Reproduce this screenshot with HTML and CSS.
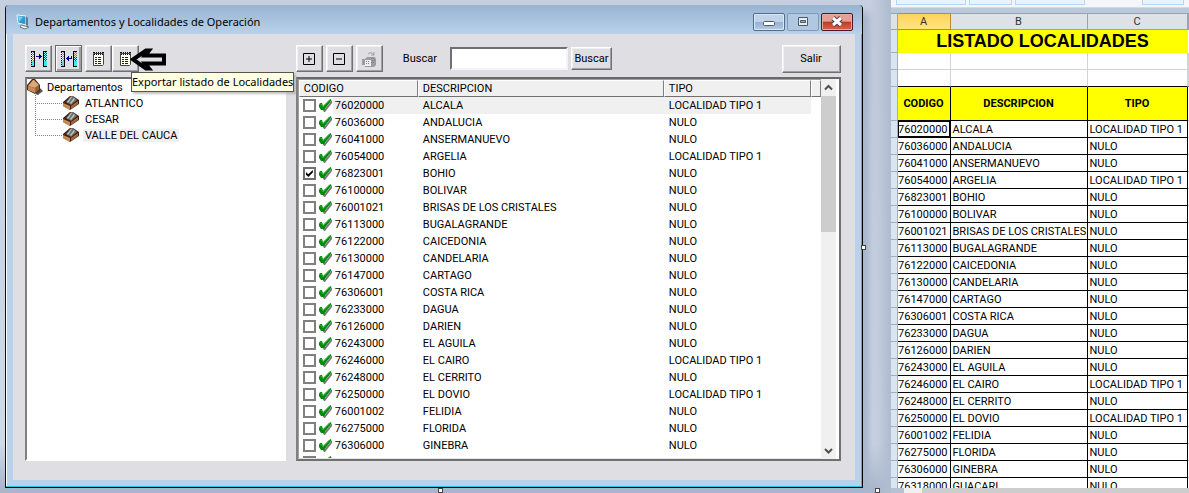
FILE: index.html
```html
<!DOCTYPE html>
<html lang="es">
<head>
<meta charset="utf-8">
<title>Departamentos y Localidades de Operación</title>
<link rel="stylesheet" href="styles.css">
</head>
<body>
<svg class="defs" aria-hidden="true">
  <symbol id="tick" viewBox="0 0 13 15">
    <path d="M3 11l2 3h1l7-9V2L6 11z" fill="#777"/>
    <path d="M0 7l1-2h2l1 3 6-6 2-1v2L5 12H2L0 9z" fill="#008a0c"/>
    <path d="M1 6h1l2 3 7-7" fill="none" stroke="#22ad2b"/>
  </symbol>
  <symbol id="drawer" viewBox="0 0 16 16">
    <path d="M0 7L7 1h3l6 4v4l-9 6L0 11z" fill="#3d2413"/>
    <path d="M0 8l7 3v4l-7-4z" fill="#c98a58"/>
    <path d="M8 11l7-5v3l-7 5z" fill="#a5673c"/>
    <path d="M3 7l5-6h2l4 4-6 5z" fill="#6e7072"/>
    <path d="M4 7l4-5h1L5 8zM7 8l4-5 1 1-4 5z" fill="#c4c7ca"/>
  </symbol>
  <symbol id="notes" viewBox="0 0 14 16">
    <path d="M1.500 2.500h10v11l-1 1h-9z" fill="#fffff0" stroke="#444"/>
    <path d="M1 1h2v1H1zm3 0h1v1H4zm2 0h1v1H6zm2 0h1v1H8zm2 0h2v1h-2zM2 3h1v1H2zm2 0h1v1H4zm2 0h1v1H6zm2 0h1v1H8zm2 0h1v1h-1z" fill="#111"/>
    <path d="M3 6.500h2m1 0h3m-6 2h2m1 0h3m-6 2h2m1 0h3m-6 2h2m1 0h3" stroke="#222"/>
  </symbol>
  <pattern id="check-cyan" width="2" height="2" patternUnits="userSpaceOnUse"><path d="M0 0h2v2H0z" fill="#fff"/><path d="M0 0h1v1H0zM1 1h1v1H1z" fill="#00b5c0"/></pattern>
  <pattern id="check-blue" width="2" height="2" patternUnits="userSpaceOnUse"><path d="M0 0h2v2H0z" fill="#9ff"/><path d="M0 0h1v1H0zM1 1h1v1H1z" fill="#22f"/></pattern>
  <pattern id="check-gold" width="2" height="2" patternUnits="userSpaceOnUse"><path d="M0 0h2v2H0z" fill="#dde0d0"/><path d="M0 0h1v1H0zM1 1h1v1H1z" fill="#96852a"/></pattern>
  <symbol id="strips" viewBox="0 0 16 18">
    <path d="M0 1h4v1H0zM3 1h1v16H3zM0 16h4v1H0zM12 1h4v1h-4zM12 1h1v16h-1zM12 16h4v1h-4z" fill="#000"/>
    <path d="M0 2h3v9H0z" fill="url(#check-cyan)"/>
    <path d="M0 11h3v5H0zM13 11h3v5h-3z" fill="#3fe6ee"/>
    <path d="M0 2h1v1H0zM0 4h1v1H0zM0 6h1v1H0zM0 8h1v1H0zM0 10h1v1H0zM0 12h1v1H0zM0 14h1v1H0z" fill="#000"/>
  </symbol>
</svg>

<main class="desktop">
  <section class="dialog">
    <header class="titlebar">
      <svg class="app-icon" viewBox="0 0 15 16" aria-hidden="true">
        <path d="M1 1l9 1v9L2 9z" fill="#2c9bd4" stroke="#eef7fc"/>
        <path d="M2 2l5 1-4 5z" fill="#85cdf0"/>
        <path d="M10 2l2 2v8l-2-1z" fill="#647b8c"/>
        <path d="M5 11l4 1 4 1-4 2-5-2z" fill="#f3f5f6" stroke="#687783"/>
      </svg>
      <h1>Departamentos y Localidades de Operación</h1>
      <div class="window-buttons">
        <button class="win" type="button" aria-label="Minimizar"><svg viewBox="0 0 30 16"><rect x="9.500" y="7.500" width="11" height="4" rx="1" fill="#fff" stroke="#505a65"/></svg></button>
        <button class="win faded" type="button" aria-label="Maximizar"><svg viewBox="0 0 30 16"><path d="M10.500 3.500h9v8h-9z" fill="#e7ebef" stroke="#505a65"/><path d="M12.500 6.500h5v2h-5z" fill="#8fadd0" stroke="#505a65"/></svg></button>
        <button class="win close" type="button" aria-label="Cerrar"><svg viewBox="0 0 30 16"><path d="M11 4l8 7M19 4l-8 7" stroke="#5b3a40" stroke-width="5"/><path d="M11 4l8 7M19 4l-8 7" stroke="#fff" stroke-width="3"/></svg></button>
      </div>
    </header>

    <div class="client">
      <div class="left">
        <div class="tools">
          <button class="tool" type="button" aria-label="Expandir"><svg viewBox="0 0 16 18"><use href="#strips"/><path d="M13 2h3v9h-3z" fill="url(#check-blue)"/><path d="M5 6h3V4h1v1h1v1h1v1h-1v1H9v1H8V7H5z" fill="#000090"/></svg></button>
          <button class="tool default" type="button" aria-label="Contraer"><svg viewBox="0 0 16 18"><use href="#strips"/><path d="M13 2h3v5h-3z" fill="url(#check-gold)"/><path d="M13 7h3v4h-3z" fill="url(#check-blue)"/><path d="M11 6h-1v2H8V6H7v1H6v1H5v1h1v1h1v1h1V9h3z" fill="#000090"/></svg></button>
          <span class="pair">
            <button class="tool" type="button" aria-label="Exportar departamentos"><svg class="note" viewBox="0 0 14 16"><use href="#notes"/></svg></button>
            <button class="tool" type="button" aria-label="Exportar localidades" aria-describedby="tip"><svg class="note" viewBox="0 0 14 16"><use href="#notes"/></svg></button>
            <svg class="pointer" viewBox="0 0 37 23" aria-hidden="true"><path d="M3 11.500L16 2.500h3l-4 5h19v8H15l4 5h-3z" fill="#dfdee3" stroke="#000" stroke-width="4"/></svg>
            <span class="tooltip" id="tip" role="tooltip">Exportar listado de Localidades</span>
          </span>
        </div>
        <div class="tree sunken">
          <div class="node root">
            <svg viewBox="0 0 16 16" aria-hidden="true"><path d="M9 11l4-2 3 3-5 4-3-1z" fill="#55565a"/><path d="M0 6l5-6h3l5 6v6l-5 3-8-4z" fill="#4a2c17"/><path d="M1 7l5-6h1l5 5-4 3z" fill="#dba77c"/><path d="M1 7l7 2v5l-7-3z" fill="#c98a58"/><path d="M8 9l4-3v5l-4 3z" fill="#9a5f36"/></svg>
            <span>Departamentos</span>
          </div>
          <ul>
            <li class="node"><svg viewBox="0 0 16 16" aria-hidden="true"><use href="#drawer"/></svg><span>ATLANTICO</span></li>
            <li class="node"><svg viewBox="0 0 16 16" aria-hidden="true"><use href="#drawer"/></svg><span>CESAR</span></li>
            <li class="node current"><svg viewBox="0 0 16 16" aria-hidden="true"><use href="#drawer"/></svg><span>VALLE DEL CAUCA</span></li>
          </ul>
        </div>
      </div>

      <div class="right">
        <div class="tools">
          <button class="tool" type="button" aria-label="Marcar todo"><svg class="sign" viewBox="0 0 12 12"><path d="M.5.5h11v11H.5zM3 6h6M6 3v6" fill="none" stroke="#000"/></svg></button>
          <button class="tool" type="button" aria-label="Desmarcar todo"><svg class="sign" viewBox="0 0 12 12"><path d="M.5.5h11v11H.5zM3 6h6" fill="none" stroke="#000"/></svg></button>
          <button class="tool" type="button" aria-label="Imprimir"><svg viewBox="0 0 16 18"><path d="M1 9h3l2-2h8l1 2v6l-2 2H4v-2H1z" fill="#9d9da1"/><path d="M7 4q3-3 6 1M13 2v3h-3" fill="none" stroke="#9d9da1"/><path d="M4 10h6v6H4z" fill="#eee"/><path d="M5 11.500h1m1 0h2m-4 2h1m1 0h2M10 8.500h4m-3 2h3m-4 2h4" stroke="#808085" stroke-dasharray="1 1"/></svg></button>
          <label for="query">Buscar</label>
          <input id="query" class="query" type="text">
          <button class="push find" type="button">Buscar</button>
          <button class="push exit" type="button">Salir</button>
        </div>
        <div class="list sunken">
          <div class="viewport">
            <table class="places">
              <colgroup><col class="c-code"><col class="c-name"><col class="c-type"><col></colgroup>
              <thead><tr><th>CODIGO</th><th>DESCRIPCION</th><th>TIPO</th><th></th></tr></thead>
              <tbody id="places"></tbody>
            </table>
          </div>
          <div class="scrollbar" aria-hidden="true">
            <svg viewBox="0 0 15 17"><path d="M4 10.500L7.500 7l3.500 3.500" fill="none" stroke="#505050" stroke-width="2"/></svg>
            <span class="thumb"></span>
            <svg class="down" viewBox="0 0 15 17"><path d="M4 7l3.500 3.500L11 7" fill="none" stroke="#505050" stroke-width="2"/></svg>
          </div>
        </div>
      </div>
    </div>
  </section>

  <section class="excel">
    <div class="ribbon"><i></i><i></i><i></i><i></i></div>
    <div class="grid">
      <table class="sheet">
        <colgroup><col class="s-row"><col class="s-a"><col class="s-b"><col class="s-c"><col></colgroup>
        <thead><tr class="letters"><th></th><th class="active">A</th><th>B</th><th>C</th><th></th></tr></thead>
        <tbody id="sheet">
          <tr class="heading"><th></th><td colspan="3">LISTADO LOCALIDADES</td><td></td></tr>
          <tr class="blank"><th></th><td></td><td></td><td></td><td></td></tr>
          <tr class="blank last"><th></th><td></td><td></td><td></td><td></td></tr>
          <tr class="fields"><th></th><td>CODIGO</td><td>DESCRIPCION</td><td>TIPO</td><td></td></tr>
        </tbody>
      </table>
    </div>
    <div class="tabs"><span></span></div>
  </section>
  <i class="handle h-bottom"></i><i class="handle h-side"></i><i class="handle h-corner"></i>
</main>
<script src="app.js"></script>
</body>
</html>
```
FILE: app.js
```js
const T1 = 'LOCALIDAD TIPO 1';
const places = [
  ['76020000', 'ALCALA', T1], ['76036000', 'ANDALUCIA'], ['76041000', 'ANSERMANUEVO'],
  ['76054000', 'ARGELIA', T1], ['76823001', 'BOHIO'], ['76100000', 'BOLIVAR'],
  ['76001021', 'BRISAS DE LOS CRISTALES'], ['76113000', 'BUGALAGRANDE'],
  ['76122000', 'CAICEDONIA'], ['76130000', 'CANDELARIA'], ['76147000', 'CARTAGO'],
  ['76306001', 'COSTA RICA'], ['76233000', 'DAGUA'], ['76126000', 'DARIEN'],
  ['76243000', 'EL AGUILA'], ['76246000', 'EL CAIRO', T1], ['76248000', 'EL CERRITO'],
  ['76250000', 'EL DOVIO', T1], ['76001002', 'FELIDIA'], ['76275000', 'FLORIDA'],
  ['76306000', 'GINEBRA'], ['76318000', 'GUACARI']
];
const checked = new Set(['76823001']);

document.getElementById('places').innerHTML = places.map(([code, name, type = 'NULO'], i) => `
  <tr${i ? '' : ' class="current"'}>
    <td><label class="item"><input type="checkbox"${checked.has(code) ? ' checked' : ''}><svg viewBox="0 0 13 15" aria-hidden="true"><use href="#tick"/></svg><span>${code}</span></label></td>
    <td>${name}</td><td>${type}</td><td></td>
  </tr>`).join('');

document.getElementById('sheet').insertAdjacentHTML('beforeend', places.map(([code, name, type = 'NULO'], i) => `
  <tr class="data"><th></th><td class="num${i ? '' : ' selected'}">${code}</td><td>${name}</td><td>${type}</td><td></td></tr>`).join(''));
```
FILE: styles.css
```css
* { box-sizing: border-box; }

body {
  margin: 0;
  font-family: Roboto, "Liberation Sans", sans-serif;
  font-size: 11px;
  color: #000;
  background: #c6cfe0;
}

button, input { font: inherit; color: inherit; margin: 0; padding: 0; }
table { border-spacing: 0; table-layout: fixed; width: 100%; }
th, td { padding: 0; text-align: left; font-weight: 400; white-space: nowrap; overflow: hidden; }
svg { display: block; }
.defs { position: absolute; width: 0; height: 0; }

.desktop {
  position: relative;
  display: flex;
  gap: 28px;
  height: 100vh;
  padding-left: 5px;
  overflow: hidden;
  background: linear-gradient(90deg, transparent 870px, #b0bccf 890px), linear-gradient(#c6cfe0, #cfd9e8 90%, #aab6cc 99%);
}

/* Dialog */
.dialog {
  flex: 857 1 0;
  min-width: 0;
  display: flex;
  flex-direction: column;
  margin: 5px 0;
  border: 1px solid #000;
  border-top: 0;
  border-left-color: #111;
  border-radius: 4px 4px 0 0;
  background: #b9d1ea;
  box-shadow: inset -1px -1px #22c5dd, inset 1px 0 #fff, 7px 7px 6px #a9b6cb;
}

.titlebar {
  display: flex;
  align-items: center;
  gap: 4px;
  height: 29px;
  padding: 4px 9px 0 10px;
  border-radius: 4px 4px 0 0;
  background: linear-gradient(#98b4d2, #b9d1ea);
}
.app-icon { width: 15px; height: 16px; }
.titlebar h1 { flex: 1; margin: 0; font: 11px "Noto Sans", sans-serif; }
.window-buttons { display: flex; gap: 2px; }
.win {
  width: 32px;
  height: 18px;
  border: 1px solid #526c8c;
  border-radius: 2px;
  background: linear-gradient(#c1d3e8 48%, #94b1d1 50%, #b3cce6);
  box-shadow: inset 0 0 0 1px #dce8f5;
}
.win svg { width: 30px; height: 16px; }
.win.faded { border-color: #8099b8; background: #b0c8e2; box-shadow: none; }
.win.close { border-color: #501824; background: linear-gradient(#e3a195 45%, #bd3b24 50%, #d4674f); box-shadow: inset 0 0 0 1px #e6aaa0; }

.client {
  flex: 1;
  min-height: 0;
  display: flex;
  gap: 10px;
  margin: 0 7px 7px;
  padding: 9px 14px 19px 12px;
  background: #dfdee3;
}
.left, .right { display: flex; flex-direction: column; gap: 3px; min-width: 0; }
.left { flex: 261 1 0; }
.right { flex: 545 1 0; }

.tools { display: flex; align-items: center; gap: 3px; height: 31px; }
.tool, .push {
  border: 1px solid;
  border-color: #fff #707070 #707070 #fff;
  background: #dfdee3;
  box-shadow: inset -1px -1px #a0a0a0, inset 1px 1px #f1f1f1;
}
.tool { display: flex; align-items: center; justify-content: center; flex: none; width: 27px; height: 27px; }
.tool.default { border-color: #696969; box-shadow: inset 1px 1px #fff, inset -2px -2px #a0a0a0; }
.tool svg { flex: none; width: 16px; height: 18px; }
.tool svg.note { width: 14px; height: 16px; }
.tool svg.sign { width: 12px; height: 12px; }
.pair { position: relative; display: flex; }
.pointer { position: absolute; left: 45px; top: 3px; width: 37px; height: 23px; }
.tooltip {
  position: absolute;
  z-index: 2;
  left: 46px;
  top: 27px;
  padding: 0;
  border: 1px solid #555;
  background: #ffffe1;
  box-shadow: 2px 2px 2px #9999;
  font: 11px/18px "Noto Sans", sans-serif;
  white-space: nowrap;
}

.tools label { margin-left: 17px; }
.query {
  flex: 118 1 0;
  min-width: 40px;
  max-width: 118px;
  height: 23px;
  margin-left: 10px;
  padding: 0 3px;
  border: 2px solid;
  border-color: #707070 #f4f4f4 #f4f4f4 #707070;
  background: #fff;
}
.push.find { width: 41px; height: 23px; }
.push.exit { width: 59px; height: 28px; margin-left: auto; }

.sunken {
  flex: 1;
  min-height: 0;
  overflow: hidden;
  border: 2px solid;
  border-color: #696969 #fff #fff #808080;
  background: #fff;
}

.tree ul { list-style: none; margin: 0 0 0 8px; padding: 0; }
.node { display: flex; align-items: center; height: 16px; position: relative; }
.node svg { width: 16px; height: 16px; flex: none; }
.root { gap: 2px; }
.root span { padding: 0 2px; }
.tree li { padding-left: 28px; gap: 4px; }
.tree li::before { content: ""; position: absolute; left: 0; bottom: 7px; width: 28px; height: 16px; border: 1px dotted #808080; border-width: 0 0 1px 1px; }
.tree li span { padding: 0 2px; }
.tree .current span { background: #f0f0f0; }

.list { display: flex; border-right-color: #707070; border-bottom-color: #707070; }
.viewport { flex: 1; min-width: 0; overflow: hidden; border: solid #a0a0a0; border-width: 1px 0 1px 1px; border-bottom-color: #e3e3e3; }
.c-code { width: 119px; }
.c-name { width: 246px; }
.c-type { width: 147px; }
.places th {
  height: 17px;
  padding-left: 4px;
  line-height: 15px;
  border: 1px solid;
  border-color: #fff #808080 #707070 #fff;
  background: #f0f0f0;
}
.places td { height: 17px; padding-left: 5px; line-height: 17px; }
.places td:first-child { padding-left: 4px; }
.item { display: flex; align-items: center; height: 17px; }
.item svg { width: 13px; height: 15px; margin: 0 1px 0 3px; }
.item span { flex: 1; padding-left: 2px; }
.item input {
  appearance: none;
  display: grid;
  place-content: center;
  width: 13px;
  height: 13px;
  border: 2px solid #808080;
  background: #fff;
}
.item input:checked { border-color: #707070; }
.item input:checked::before { content: ""; width: 7px; height: 7px; background: #000; clip-path: polygon(0 30%, 35% 60%, 100% 0, 100% 35%, 35% 100%, 0 65%); }
.current .item span, .places .current td:nth-child(2), .places .current td:nth-child(3) { background: #f0f0f0; }

.scrollbar { display: flex; flex-direction: column; width: 18px; background: #f0f0f0; border-right: 3px solid #fff; }
.scrollbar svg { width: 15px; height: 17px; }
.thumb { height: 136px; background: #cdcdcd; }
.scrollbar .down { margin-top: auto; }

/* Spreadsheet */
.excel { flex: 299 1 0; min-width: 0; display: flex; flex-direction: column; background: #dae5f2; }
.ribbon { display: flex; gap: 3px; height: 8px; padding: 0 5px; background: #f5f6f9; border-bottom: 1px solid #d4dae3; }
.ribbon i { flex: 71 1 0; height: 5px; border: 1px solid #b5d6f5; border-top: 0; background: #eaf2fb; }
.ribbon i:nth-child(2) { flex-grow: 42; }
.ribbon i:nth-child(4) { flex-grow: 41; margin-left: 54px; }
.grid { flex: 1; min-height: 0; overflow: hidden; padding-top: 5px; background: #bac8dc; }
.sheet { background: #fff; }
.s-row { width: 7px; }
.s-a { width: 53px; }
.s-b { width: 137px; }
.s-c { width: 100px; }
.sheet tbody th { background: #dae5f2; border-right: 1px solid #a5adb8; border-bottom: 1px solid #a5adb8; }
.letters th {
  height: 17px;
  line-height: 15px;
  text-align: center;
  color: #333;
  background: #dee2e7;
  border: 1px solid #9aa3b0;
  border-width: 1px 1px 1px 0;
}
.letters .active { background: linear-gradient(#ffd25c, #ffe67a); border-color: #c08a30; }
.heading td { height: 23px; font: bold 18px/23px "Liberation Sans", sans-serif; text-align: center; background: #ff0; }
.heading td:last-child { background: #fff; }
.blank td { height: 17px; border-right: 1px solid #d0d4d8; border-bottom: 1px solid #d0d4d8; }
.blank.last td { border-bottom-color: #000; }
.fields td { height: 34px; text-align: center; font-weight: 700; background: #ff0; border-right: 1px solid #000; border-bottom: 1px solid #000; }
.data td { height: 17px; padding: 1px 0 0 2px; line-height: 15px; border-right: 1px solid #000; border-bottom: 1px solid #000; }
.sheet .data .num { padding: 1px 2px 0 0; text-align: right; }
.sheet .data .selected { box-shadow: inset 0 0 0 1px #000; }
.fields td:last-child, .data td:last-child { background: #fff; border: 0 solid #d0d4d8; border-bottom-width: 1px; }
.tabs { height: 5px; padding-left: 13px; background: #b5c1d4; }
.tabs span { display: block; height: 5px; background: linear-gradient(90deg, #f0f0f0 18px, #cdcdcd 18px); }

/* Resize handles of the selected frame */
.handle { position: absolute; width: 5px; height: 5px; border: 1px solid #444; background: #fff; }
.h-bottom { left: 438px; bottom: 0; }
.h-side { left: 861px; top: 245px; }
.h-corner { left: 875px; bottom: 0; }
```
